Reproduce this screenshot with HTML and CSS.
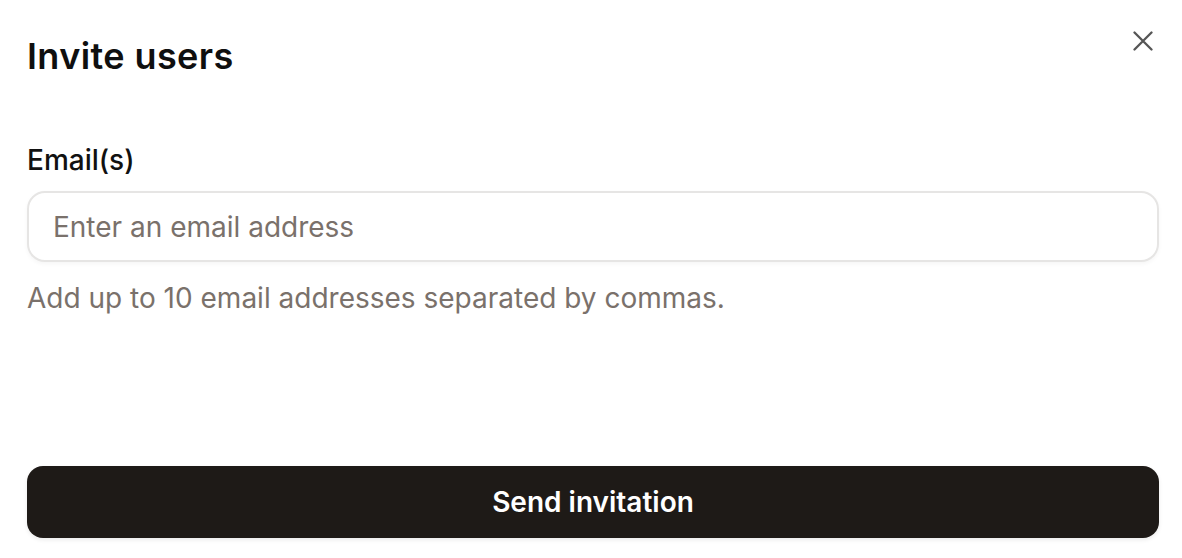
FILE: index.html
```html
<!DOCTYPE html>
<html lang="en">
<head>
<meta charset="utf-8">
<title>Invite users</title>
<link rel="stylesheet" href="styles.css">
</head>
<body>
<div class="dialog">
  <div class="header">
    <h1 class="title">Invite users</h1>
    <button class="close" aria-label="Close">
      <svg width="20" height="20" viewBox="0 0 20 20" fill="none" stroke="#555" stroke-width="2.3" stroke-linecap="round">
        <path d="M1.5 1.5 L18.5 18.5 M18.5 1.5 L1.5 18.5"/>
      </svg>
    </button>
  </div>
  <label class="label" for="email">Email(s)</label>
  <input class="input" id="email" type="text" placeholder="Enter an email address">
  <p class="hint">Add up to 10 email addresses separated by commas.</p>
  <div class="spacer"></div>
  <button class="submit">Send invitation</button>
</div>
</body>
</html>
```

FILE: styles.css
```css
* { box-sizing: border-box; }
html, body { margin: 0; padding: 0; background: #fff; }
body { font-family: Inter, "Noto Sans", sans-serif; color: #111; }

.dialog {
  width: 1182px;
  height: 558px;
  padding: 0 23px 0 27px;
  display: flex;
  flex-direction: column;
}

.header {
  display: flex;
  justify-content: space-between;
  align-items: flex-start;
  padding-top: 36px;
}

.title {
  margin: 0;
  font-size: 36px;
  line-height: 40px;
  font-weight: 600;
  letter-spacing: 0.4px;
  color: #0f0f0f;
}

.close {
  border: 0;
  background: none;
  padding: 0;
  margin: -5px 6px 0 0;
  width: 20px;
  height: 20px;
  display: flex;
  cursor: pointer;
}

.label {
  margin-top: 67px;
  font-size: 28px;
  line-height: 34px;
  font-weight: 500;
  color: #111;
}

.input {
  margin-top: 14px;
  height: 71px;
  width: 100%;
  border: 2px solid #e6e5e4;
  border-radius: 18px;
  padding: 0 24px;
  font-family: Inter, "Noto Sans", sans-serif;
  font-size: 28px;
  color: #111;
  background: #fff;
  box-shadow: 0 2px 4px rgba(0,0,0,0.04);
  outline: none;
}
.input::placeholder { color: #7a716b; }

.hint {
  margin: 19px 0 0;
  font-size: 28px;
  line-height: 34px;
  color: #7a716b;
}

.spacer { flex: 1; }

.submit {
  margin-bottom: 20px;
  height: 72px;
  width: 100%;
  border: 0;
  border-radius: 16px;
  background: #1e1a17;
  color: #fff;
  font-family: Inter, "Noto Sans", sans-serif;
  font-size: 28px;
  font-weight: 600;
  box-shadow: 0 2px 4px rgba(0,0,0,0.08);
  cursor: pointer;
}
```
